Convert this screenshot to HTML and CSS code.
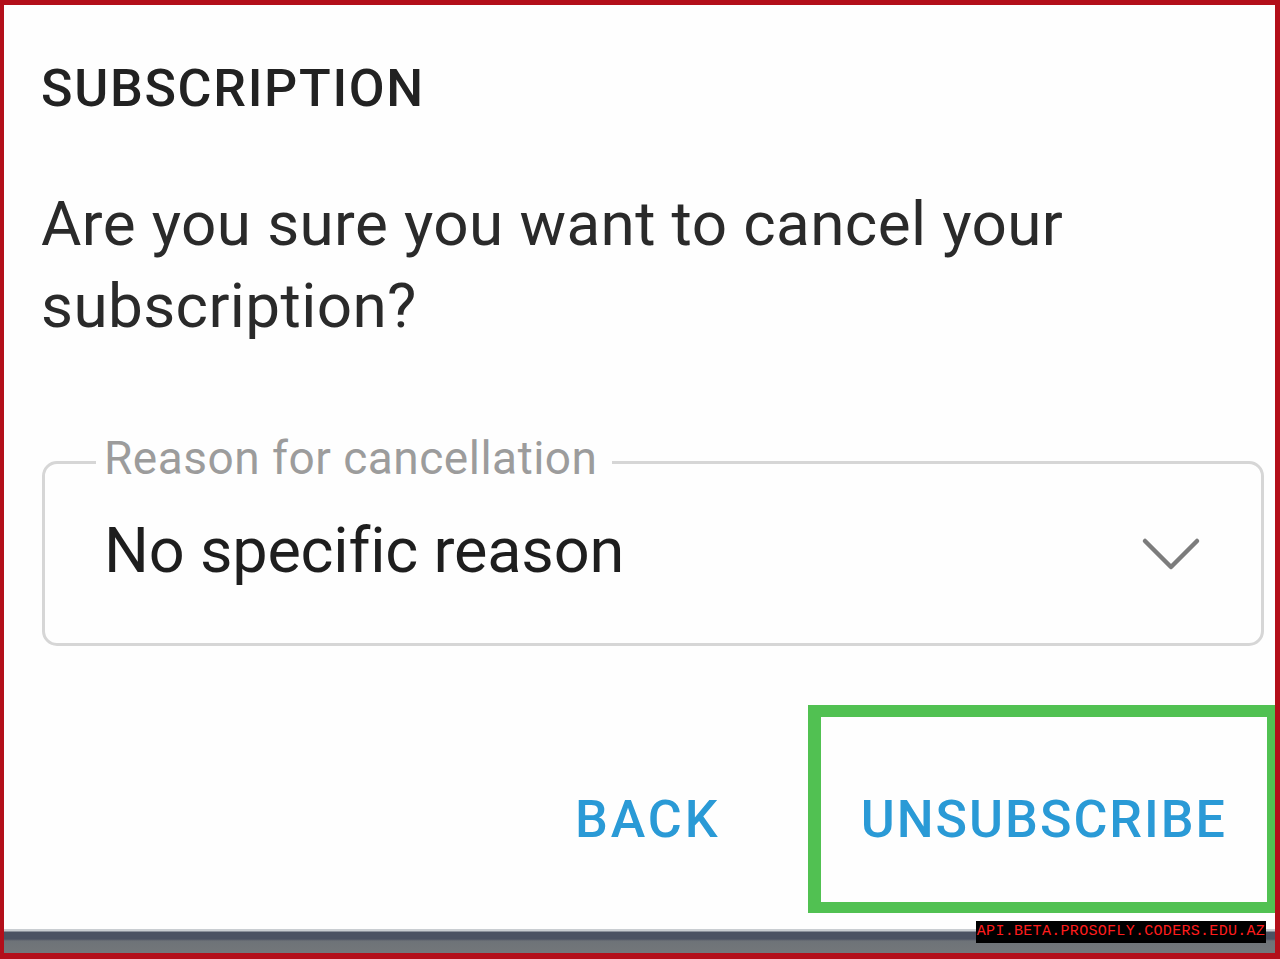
FILE: index.html
```html
<!DOCTYPE html>
<html lang="en">
<head>
<meta charset="utf-8">
<title>Subscription</title>
<link rel="stylesheet" href="styles.css">
</head>
<body>
<div class="frame">
  <div class="dialog">
    <h1 class="title">SUBSCRIPTION</h1>
    <p class="message">Are you sure you want to cancel your subscription?</p>
    <fieldset class="field">
      <legend class="field-label">Reason for cancellation</legend>
      <div class="select">
        <span class="select-value">No specific reason</span>
        <svg class="chevron" width="60" height="36" viewBox="0 0 60 36" aria-hidden="true">
          <polyline points="4,5 30,31 56,5" fill="none" stroke="#7c7c7c" stroke-width="4.5" stroke-linecap="round" stroke-linejoin="round"/>
        </svg>
      </div>
    </fieldset>
    <div class="actions">
      <button class="btn btn-back">BACK</button>
      <button class="btn btn-unsub">UNSUBSCRIBE</button>
    </div>
  </div>
  <div class="taskbar"></div>
  <div class="highlight"></div>
  <div class="watermark">API.BETA.PROSOFLY.CODERS.EDU.AZ</div>
</div>
</body>
</html>
```

FILE: styles.css
```css
html, body {
  margin: 0;
  padding: 0;
  background: #ffffff;
}

.frame {
  position: relative;
  width: 1280px;
  height: 959px;
  box-sizing: border-box;
  border-style: solid;
  border-color: #b30f1a;
  border-width: 5px 5px 6px 4px;
  background: #fefefe;
  display: flex;
  flex-direction: column;
  overflow: hidden;
  font-family: Roboto, "Liberation Sans", sans-serif;
}

.dialog {
  flex: 1;
  padding: 58px 11px 0 37px;
  display: flex;
  flex-direction: column;
}

.title {
  margin: 0;
  font-size: 52px;
  line-height: 52px;
  font-weight: 500;
  color: #222222;
  letter-spacing: 1.7px;
}

.message {
  margin: 68px 0 0 0;
  font-size: 62px;
  line-height: 82px;
  font-weight: 400;
  color: #2a2a2a;
  letter-spacing: 0.4px;
  max-width: 1100px;
}

.field {
  margin: 84px 0 0 1px;
  padding: 19px 60px 53px 59px;
  border: 3px solid #d6d6d6;
  border-radius: 15px;
  min-width: 0;
}

.field-label {
  margin-left: -8px;
  padding: 0 14px 8px 8px;
  font-size: 46px;
  line-height: 54px;
  letter-spacing: 0.5px;
  color: #9c9c9c;
}

.select {
  display: flex;
  align-items: center;
  justify-content: space-between;
}

.select-value {
  font-size: 63px;
  line-height: 78px;
  letter-spacing: -0.2px;
  color: #1e1e1e;
}

.chevron {
  display: block;
  margin-top: 6px;
  margin-right: 0;
}

.actions {
  margin-top: 148px;
  display: flex;
  justify-content: flex-end;
  gap: 140px;
  padding-right: 37px;
}

.btn {
  margin: 0;
  padding: 0;
  border: 0;
  background: transparent;
  font-family: Roboto, "Liberation Sans", sans-serif;
  font-size: 52px;
  line-height: 52px;
  font-weight: 500;
  letter-spacing: 2px;
  color: #2a9ad6;
}

.btn-back {
  letter-spacing: 3px;
}

.taskbar {
  height: 24px;
  background: linear-gradient(to bottom, #c9cdd1 0px, #c9cdd1 2px, #4b5262 3px, #4b5262 10px, #6e7378 12px, #73777a 24px);
}

.highlight {
  position: absolute;
  left: 804px;
  top: 700px;
  width: 472px;
  height: 208px;
  box-sizing: border-box;
  border: 13px solid #51c152;
  border-bottom-width: 11px;
  border-top-width: 12px;
}

.watermark {
  position: absolute;
  left: 972px;
  top: 916px;
  width: 290px;
  height: 22px;
  background: #000000;
  color: #ff1c1c;
  font-family: "Liberation Mono", "DejaVu Sans Mono", monospace;
  font-size: 15px;
  line-height: 22px;
  text-align: center;
  letter-spacing: 0.3px;
}
```
